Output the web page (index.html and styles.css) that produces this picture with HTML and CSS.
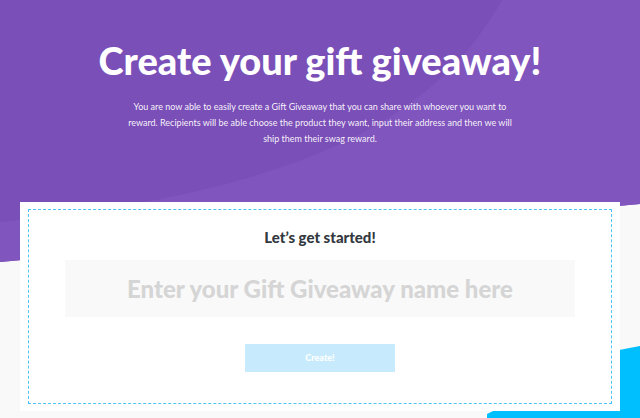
FILE: index.html
```html
<!DOCTYPE html>
<html lang="en">

<head>
    <meta charset="UTF-8">
    <title>Create your gift giveaway</title>
    <link rel="stylesheet" href="styles.css">
</head>

<body>
    <!-- Background shapes -->
    <svg class="backdrop" viewBox="0 0 640 418" preserveAspectRatio="none" aria-hidden="true">
        <path d="M0 0 H640 V204 L0 262 Z" fill="#7b4fb8" />
        <path d="M502 0 C440 110 320 190 0 222 L0 262 L640 204 V0 Z" fill="#8055bd" />
        <path d="M487 414 L619 350 L640 346 V418 H487 Z" fill="#00bfff" />
    </svg>

    <!-- Intro -->
    <header class="hero">
        <h1>Create your gift giveaway!</h1>
        <p>You are now able to easily create a Gift Giveaway that you can share with whoever you want to<br>
            reward. Recipients will be able choose the product they want, input their address and then we will<br>
            ship them their swag reward.</p>
    </header>

    <!-- Giveaway form -->
    <div class="card">
        <form class="card-inner" id="giveawayForm">
            <h2>Let’s get started!</h2>
            <input type="text" class="name-input" placeholder="Enter your Gift Giveaway name here">
            <button type="submit" class="create-btn">Create!</button>
        </form>
    </div>
</body>

</html>
```

FILE: styles.css
```css
/* Basic styling */
body {
    font-family: Lato, "Liberation Sans", sans-serif;
    margin: 0;
    padding: 0;
    overflow: hidden;
    background-color: #f9f9f9;
    color: #33393f;
    position: relative;
    height: 418px;
}

.backdrop {
    position: absolute;
    top: 0;
    left: 0;
    width: 100%;
    height: 100%;
    z-index: -1; /* Place behind other content */
}

.hero {
    position: relative;
    padding-top: 38px;
    text-align: center;
    color: #fff;
}

.hero h1 {
    margin: 0;
    font-size: 38px;
    line-height: 1.2;
    font-weight: 900;
}

.hero p {
    margin: 15px auto 0;
    font-size: 9px;
    line-height: 16px;
    white-space: nowrap;
    color: rgba(255, 255, 255, 0.95);
}

.card {
    position: relative;
    margin: 55px 20px 0;
    padding: 7px 8px;
    background: #fff;
}

.card-inner {
    display: flex;
    flex-direction: column;
    align-items: center;
    border: 1px dashed #4cc4f5;
    padding: 18px 0 31px;
    margin: 0;
}

.card-inner h2 {
    margin: 0;
    font-size: 15px;
    line-height: 18px;
    font-weight: 900;
}

.name-input {
    box-sizing: border-box;
    width: 510px;
    height: 57px;
    margin-top: 14px;
    border: none;
    background: #f9f9f9;
    text-align: center;
    font-family: inherit;
    font-size: 24px;
    font-weight: 900;
    color: #33393f;
    outline: none;
}

.name-input::placeholder {
    color: #d5d5d5;
}

.create-btn {
    width: 150px;
    height: 28px;
    margin-top: 27px;
    border: none;
    background: #c7ebfd;
    color: #fff;
    font-family: inherit;
    font-size: 9px;
    font-weight: 900;
    cursor: pointer;
}
```
